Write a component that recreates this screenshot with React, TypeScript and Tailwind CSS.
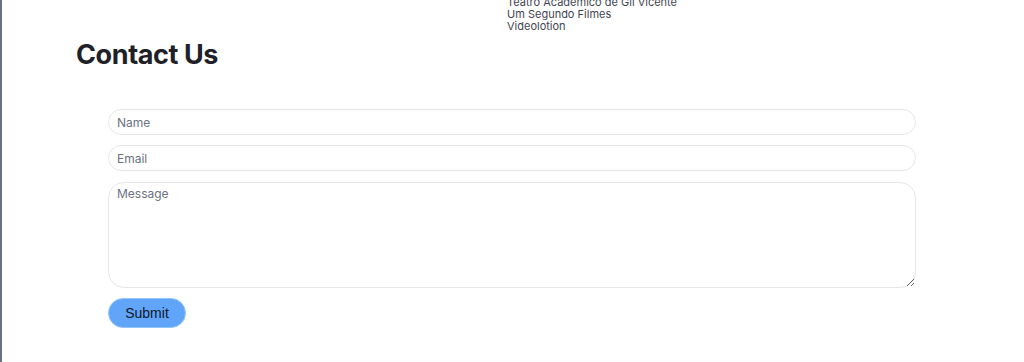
import React from 'react';

const CREDITS = ['Teatro Académico de Gil Vicente', 'Um Segundo Filmes', 'Videolotion'];

const App: React.FC = () => {
  return (
    <div className="w-full h-[362px] overflow-hidden bg-white border-l-2 border-gray-500 font-['Inter',sans-serif]">
      {/* tail of the credits list above */}
      <ul className="-mt-[4px] ml-[505px] text-[11px] leading-[12px] text-[#3f4550]">
        {CREDITS.map((c) => (
          <li key={c}>{c}</li>
        ))}
      </ul>

      <h2 className="mt-[6px] ml-[74px] text-[27px] leading-[34px] font-bold text-[#1f2128] tracking-[-0.4px]">
        Contact Us
      </h2>

      <form className="mt-[37px] ml-[106px] w-[808px] flex flex-col gap-[10px]" onSubmit={(e) => e.preventDefault()}>
        <input
          type="text"
          placeholder="Name"
          className="h-[26px] w-full rounded-full border border-gray-200 px-2 text-xs text-gray-800 placeholder:text-[#6b7280] outline-none"
        />
        <input
          type="email"
          placeholder="Email"
          className="h-[26px] w-full rounded-full border border-gray-200 px-2 text-xs text-gray-800 placeholder:text-[#6b7280] outline-none"
        />
        <textarea
          placeholder="Message"
          className="mt-px h-[106px] w-full rounded-2xl border border-gray-200 px-2 pt-[3px] text-xs text-gray-800 placeholder:text-[#6b7280] outline-none"
        />
        <div>
          <button
            type="submit"
            className="h-[30px] w-[78px] rounded-full bg-[#60a5fa] border border-[#93c5fd] text-sm text-[#111827] font-['Liberation_Sans',sans-serif]"
          >
            Submit
          </button>
        </div>
      </form>
    </div>
  );
};

export default App;
